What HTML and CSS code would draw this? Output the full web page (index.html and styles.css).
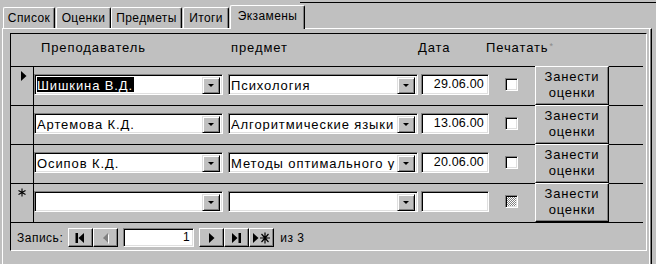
FILE: index.html
```html
<!DOCTYPE html>
<html lang="ru">
<head>
    <meta charset="UTF-8">
    <title>Экзамены</title>
    <link rel="stylesheet" href="styles.css">
</head>
<body>
<div class="topline"></div>
<div class="tabs">
    <span class="tab t1">Список</span>
    <span class="tab t2">Оценки</span>
    <span class="tab t3">Предметы</span>
    <span class="tab t4">Итоги</span>
    <span class="tab on">Экзамены</span>
</div>
<div class="panel">
    <div class="sheet">
        <div class="head">
            <span class="h1">Преподаватель</span>
            <span class="h2">предмет</span>
            <span class="h3">Дата</span>
            <span class="h4">Печатать<i>*</i></span>
        </div>

        <div class="row">
            <div class="sel">
                <svg width="22" height="16" viewBox="0 0 22 16"><path d="M10 4 L15.5 9 L10 14 Z" fill="#000"/></svg>
            </div>
            <div class="combo c1"><span class="txt"><b>Шишкина В.Д.</b></span><span class="drop"></span></div>
            <div class="combo c2"><span class="txt">Психология</span><span class="drop"></span></div>
            <div class="date">29.06.00</div>
            <span class="check"></span>
            <div class="btn">Занести<br>оценки</div>
        </div>

        <div class="row">
            <div class="sel"></div>
            <div class="combo c1"><span class="txt">Артемова К.Д.</span><span class="drop"></span></div>
            <div class="combo c2"><span class="txt">Алгоритмические языки</span><span class="drop"></span></div>
            <div class="date">13.06.00</div>
            <span class="check"></span>
            <div class="btn">Занести<br>оценки</div>
        </div>

        <div class="row">
            <div class="sel"></div>
            <div class="combo c1"><span class="txt">Осипов К.Д.</span><span class="drop"></span></div>
            <div class="combo c2"><span class="txt">Методы оптимального у</span><span class="drop"></span></div>
            <div class="date">20.06.00</div>
            <span class="check"></span>
            <div class="btn">Занести<br>оценки</div>
        </div>

        <div class="row">
            <div class="sel">
                <svg width="22" height="16" viewBox="0 0 22 16"><path d="M11 4.5 V12.5 M7.5 6.5 L14.5 10.5 M7.5 10.5 L14.5 6.5" stroke="#000" stroke-width="1.1"/></svg>
            </div>
            <div class="combo c1"><span class="txt"></span><span class="drop"></span></div>
            <div class="combo c2"><span class="txt"></span><span class="drop"></span></div>
            <div class="date"></div>
            <span class="check null"></span>
            <div class="btn">Занести<br>оценки</div>
        </div>

        <div class="nav">
            <span class="lbl">Запись:</span>
            <span class="nb"><svg width="23" height="16" viewBox="0 0 23 16"><path d="M6.5 3h2.5v10H6.5z M15 3 L9.5 8 L15 13 Z" fill="#000"/></svg></span>
            <span class="nb"><svg width="23" height="16" viewBox="0 0 23 16"><path d="M15 4 L10 9 L15 14 Z" fill="#fff"/><path d="M14 3 L9 8 L14 13 Z" fill="#808080"/></svg></span>
            <span class="num">1</span>
            <span class="nb"><svg width="23" height="16" viewBox="0 0 23 16"><path d="M9 3 L14.5 8 L9 13 Z" fill="#000"/></svg></span>
            <span class="nb"><svg width="23" height="16" viewBox="0 0 23 16"><path d="M7 3 L12.5 8 L7 13 Z M13.5 3h2.5v10h-2.5z" fill="#000"/></svg></span>
            <span class="nb"><svg width="23" height="16" viewBox="0 0 23 16"><path d="M3 3 L8.5 8 L3 13 Z" fill="#000"/><path d="M15 2.5 V13.5 M10 8 H20 M11.5 4 L18.5 12 M11.5 12 L18.5 4" stroke="#000" stroke-width="1.2"/></svg></span>
            <span class="of">из 3</span>
        </div>
    </div>
</div>
</body>
</html>
```

FILE: styles.css
```css
* {margin:0; padding:0; box-sizing:border-box;}
body {width:656px; height:264px; overflow:hidden; background:#c0c0c0; font-family:"Liberation Sans", Arial, sans-serif; font-size:13px; letter-spacing:0.9px; color:#000;}

/* вкладки */
.topline {height:3px; border-bottom:1px solid #000; margin:0 0 -1px 300px;}
.tabs {display:flex; padding:3px 0 0 3px; height:26px; align-items:flex-end; position:relative; z-index:2;}
.tab {height:21px; font-size:12px; letter-spacing:0.4px; display:flex; align-items:center; justify-content:center; background:#c0c0c0;
    border-top:1px solid #fff; border-left:1px solid #fff; border-right:1px solid #000; border-radius:2px 2px 0 0;
    box-shadow:inset -1px 0 #808080;}
.t1 {width:52px;}
.t2 {width:55px; margin-left:1px;}
.t3 {width:71px;}
.t4 {width:46px; margin-left:1px;}
.tab.on {width:75px; height:24px; margin-left:1px; padding-bottom:4px; margin-bottom:-1px;}

.panel {margin-left:2px; width:650px; height:240px; border-top:1px solid #fff; border-left:1px solid #fff; border-right:1px solid #000;
    box-shadow:inset -1px 0 #808080, inset -2px 0 #fff; padding:4px 0 0 7px;}

/* таблица */
.sheet {width:637px; height:218px; border-top:1px solid #000; border-left:1px solid #000; border-right:1px solid #fff; border-bottom:1px solid #fff; padding-right:3px;}
.head {height:32px; display:flex; align-items:center; padding:0 0 6px 30px;}
.head .h1 {width:190px;}
.head .h2 {width:187px;}
.head .h3 {width:68px;}
.head i {font-style:normal; color:#8a8a8a; font-size:9px; vertical-align:3px; margin-left:1px;}

.row {height:39px; border-top:1px solid #000; display:flex; align-items:flex-start;}
.sel {width:23px; height:38px; border-right:1px solid #000;}
.sel svg {display:block;}

.combo, .date, .num, .check {background:#fff; border:1px solid; border-color:#808080 #fff #fff #808080; box-shadow:inset 1px 1px #000, inset -1px -1px #dfdfdf;}
.combo {margin-top:7px; height:21px; display:flex; padding:2px;}
.c1 {width:189px;}
.c2 {width:190px; margin-left:5px;}
.txt {flex:1; overflow:hidden; white-space:nowrap; line-height:17px;}
.txt b {font-weight:normal; background:#000; color:#fff; display:inline-block; padding-right:1px;}
.drop {width:18px; height:17px; background:#c0c0c0; border:1px solid; border-color:#dfdfdf #000 #000 #dfdfdf; box-shadow:inset 1px 1px #fff, inset -1px -1px #808080; position:relative;}
.drop::after {content:""; position:absolute; left:5px; top:6px; border-left:3px solid transparent; border-right:3px solid transparent; border-top:3px solid #000;}

.date {margin:7px 0 0 3px; width:68px; height:21px; font-size:12.5px; letter-spacing:0.2px; text-align:right; padding:0 4px; line-height:19px;}
.check {margin:11px 0 0 16px; width:13px; height:13px;}
.check.null {background:repeating-conic-gradient(#808080 0 25%, #fff 0 50%) 0 0/2px 2px;}

.btn {margin:-1px 0 0 17px; width:74px; height:39px; border:1px solid; border-color:#fff #000 #000 #fff; box-shadow:inset -1px -1px #808080;
    text-align:center; line-height:16px; padding-top:2px; letter-spacing:0.8px;}

/* навигация */
.nav {height:28px; border-top:1px solid #000; display:flex; align-items:center; padding:2px 0 0 6px; font-size:12px; letter-spacing:0.5px;}
.lbl {margin-right:5px;}
.nb {width:25px; height:19px; border:1px solid; border-color:#fff #000 #000 #fff; box-shadow:inset -1px -1px #808080; display:flex; align-items:center; justify-content:center;}
.nb svg {display:block;}
.num {width:71px; height:19px; margin:0 5px; text-align:right; padding-right:3px; line-height:17px;}
.of {margin-left:6px;}
```
